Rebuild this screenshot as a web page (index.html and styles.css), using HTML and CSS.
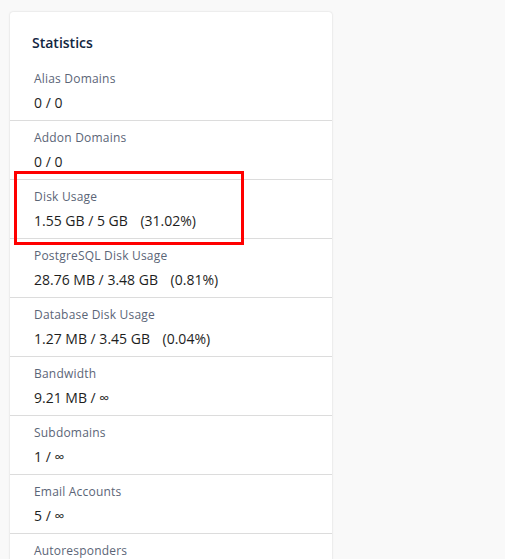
FILE: index.html
```html
<!DOCTYPE html>
<html lang="en">
<head>
    <meta charset="UTF-8">
    <meta name="viewport" content="width=device-width, initial-scale=1.0">
    <title>Statistics</title>
<link rel="stylesheet" href="styles.css">
</head>
<body>
   <div class="stats-card">
    <h2 class="stats-title">Statistics</h2>
    <ul class="stats-list">
        <li class="stat">
            <div class="stat-label">Alias Domains</div>
            <div class="stat-value">0 / 0</div>
        </li>
        <li class="stat">
            <div class="stat-label">Addon Domains</div>
            <div class="stat-value">0 / 0</div>
        </li>
        <li class="stat highlighted">
            <div class="stat-label">Disk Usage</div>
            <div class="stat-value">1.55 GB / 5 GB <span class="pct">(31.02%)</span></div>
            <div class="highlight-box"></div>
        </li>
        <li class="stat">
            <div class="stat-label">PostgreSQL Disk Usage</div>
            <div class="stat-value">28.76 MB / 3.48 GB <span class="pct">(0.81%)</span></div>
        </li>
        <li class="stat">
            <div class="stat-label">Database Disk Usage</div>
            <div class="stat-value">1.27 MB / 3.45 GB <span class="pct">(0.04%)</span></div>
        </li>
        <li class="stat">
            <div class="stat-label">Bandwidth</div>
            <div class="stat-value">9.21 MB / ∞</div>
        </li>
        <li class="stat">
            <div class="stat-label">Subdomains</div>
            <div class="stat-value">1 / ∞</div>
        </li>
        <li class="stat">
            <div class="stat-label">Email Accounts</div>
            <div class="stat-value">5 / ∞</div>
        </li>
        <li class="stat">
            <div class="stat-label">Autoresponders</div>
            <div class="stat-value">0 / ∞</div>
        </li>
        <li class="stat">
            <div class="stat-label">Forwarders</div>
            <div class="stat-value">0 / ∞</div>
        </li>
    </ul>
   </div>
</body>
</html>
```

FILE: styles.css
```css
    body {
        margin: 0;
        padding: 12px 0 0 10px;
        background: #f9f9f9;
        font-family: "Open Sans", "DejaVu Sans", sans-serif;
    }
    .stats-card {
        width: 322px;
        background: #fff;
        border-radius: 3px;
        box-shadow: 0 0 2px rgba(0, 0, 0, 0.18);
        padding-top: 21px;
    }
    .stats-title {
        margin: 0 0 10px 22px;
        font-size: 14px;
        font-weight: 600;
        line-height: 19px;
        color: #12263f;
    }
    .stats-list {
        list-style: none;
        margin: 0;
        padding: 0;
    }
    .stat {
        position: relative;
        display: flex;
        flex-direction: column;
        gap: 5px;
        padding: 8px 0 7px 24px;
        border-bottom: 1px solid #dcdcdc;
    }
    .stat-label {
        font-size: 12px;
        line-height: 18px;
        letter-spacing: 0.2px;
        color: #5b6577;
    }
    .stat-value {
        font-size: 14px;
        line-height: 20px;
        color: #1e1e1e;
    }
    .stat-value .pct {
        margin-left: 9px;
    }
    /* annotation drawn over the disk usage row */
    .highlight-box {
        position: absolute;
        left: 4px;
        top: -9px;
        width: 230px;
        height: 74px;
        box-sizing: border-box;
        border: 3px solid #ff0000;
    }
```
